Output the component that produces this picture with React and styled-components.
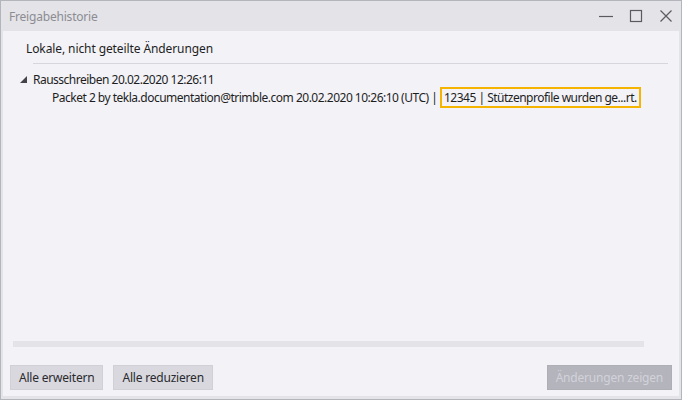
import styled, { createGlobalStyle } from 'styled-components';

const GlobalStyle = createGlobalStyle`
  html, body {
    margin: 0;
    padding: 0;
    background: #e3e3e8;
  }
  body {
    font-family: "Noto Sans", "Open Sans", sans-serif;
    font-size: 12px;
    color: #1e1e1e;
  }
`;

export default function App() {
  return (
    <>
      <GlobalStyle />
      <Window>
        <TitleBar>
          <Title>Freigabehistorie</Title>
          <Controls>
            <ControlButton aria-label="Minimieren">
              <svg width="14" height="14" viewBox="0 0 14 14">
                <line x1="0" y1="7.5" x2="14" y2="7.5" stroke="#5a5a60" strokeWidth="1.2" />
              </svg>
            </ControlButton>
            <ControlButton aria-label="Maximieren">
              <svg width="14" height="14" viewBox="0 0 14 14">
                <rect x="1.5" y="1.5" width="11" height="11" fill="none" stroke="#5a5a60" strokeWidth="1.2" />
              </svg>
            </ControlButton>
            <ControlButton aria-label="Schließen">
              <svg width="14" height="14" viewBox="0 0 14 14">
                <path d="M1.5 1.5 L12.5 12.5 M12.5 1.5 L1.5 12.5" stroke="#5a5a60" strokeWidth="1.2" />
              </svg>
            </ControlButton>
          </Controls>
        </TitleBar>
        <Body>
          <SectionHeader>Lokale, nicht geteilte Änderungen</SectionHeader>
          <Separator />
          <Tree>
            <TreeNode>
              <Expander>
                <svg width="7" height="7" viewBox="0 0 7 7">
                  <polygon points="7,0 7,7 0,7" fill="#444448" />
                </svg>
              </Expander>
              <span>Rausschreiben 20.02.2020 12:26:11</span>
            </TreeNode>
            <TreeChild>
              Packet 2 by tekla.documentation@trimble.com 20.02.2020 10:26:10 (UTC) |{' '}
              <Highlight>12345 | Stützenprofile wurden ge...rt.</Highlight>
            </TreeChild>
          </Tree>
          <ScrollTrack />
          <Footer>
            <Button>Alle erweitern</Button>
            <Button>Alle reduzieren</Button>
            <Spacer />
            <Button disabled>Änderungen zeigen</Button>
          </Footer>
        </Body>
      </Window>
    </>
  );
}

const Window = styled.div`
  width: 682px;
  height: 400px;
  box-sizing: border-box;
  border: 1px solid #b4b4bc;
  background: #e3e3e8;
  display: flex;
  flex-direction: column;
  padding: 0 2px 3px 2px;
`;

const TitleBar = styled.div`
  height: 30px;
  display: flex;
  align-items: center;
  justify-content: space-between;
  padding-left: 6px;
`;

const Title = styled.div`
  color: #8c8c92;
  font-size: 12px;
  letter-spacing: -0.2px;
`;

const Controls = styled.div`
  display: flex;
  align-items: center;
  gap: 16px;
  padding-right: 6px;
`;

const ControlButton = styled.div`
  width: 14px;
  height: 14px;
  display: flex;
  align-items: center;
  justify-content: center;
`;

const Body = styled.div`
  flex: 1;
  background: #f2f2f7;
  display: flex;
  flex-direction: column;
  padding: 0 7px 6px 7px;
  min-height: 0;
`;

const SectionHeader = styled.div`
  padding: 9px 0 0 16px;
  height: 24px;
  box-sizing: border-box;
  font-size: 12px;
  letter-spacing: -0.1px;
`;

const Separator = styled.div`
  height: 1px;
  background: #d6d6dc;
  margin: 8px 4px 0 23px;
`;

const Tree = styled.div`
  flex: 1;
  padding: 7px 0 0 10px;
  letter-spacing: -0.5px;
`;

const TreeNode = styled.div`
  display: flex;
  align-items: center;
  height: 16px;
`;

const Expander = styled.span`
  width: 13px;
  display: inline-flex;
  align-items: center;
  padding-top: 1px;
`;

const TreeChild = styled.div`
  padding-left: 32px;
  height: 20px;
  display: flex;
  align-items: center;
  white-space: pre;
`;

const Highlight = styled.span`
  border: 2px solid #f4b400;
  padding: 1px 2px 1px 2px;
  line-height: 15px;
`;

const ScrollTrack = styled.div`
  height: 6px;
  background: #e3e3e8;
  margin: 0 28px 18px 3px;
`;

const Footer = styled.div`
  display: flex;
  align-items: center;
  gap: 10px;
`;

const Spacer = styled.div`
  flex: 1;
`;

const Button = styled.button`
  font-family: "Noto Sans", "Open Sans", sans-serif;
  font-size: 12px;
  letter-spacing: -0.2px;
  height: 25px;
  padding: 0 8px;
  border: 1px solid ${(p) => (p.disabled ? '#aeaeb6' : '#d0d0d6')};
  background: ${(p) => (p.disabled ? '#b4b4bc' : '#d8d8de')};
  color: ${(p) => (p.disabled ? '#d2d2da' : '#2a2a2e')};
  border-radius: 0;
  cursor: default;
`;
